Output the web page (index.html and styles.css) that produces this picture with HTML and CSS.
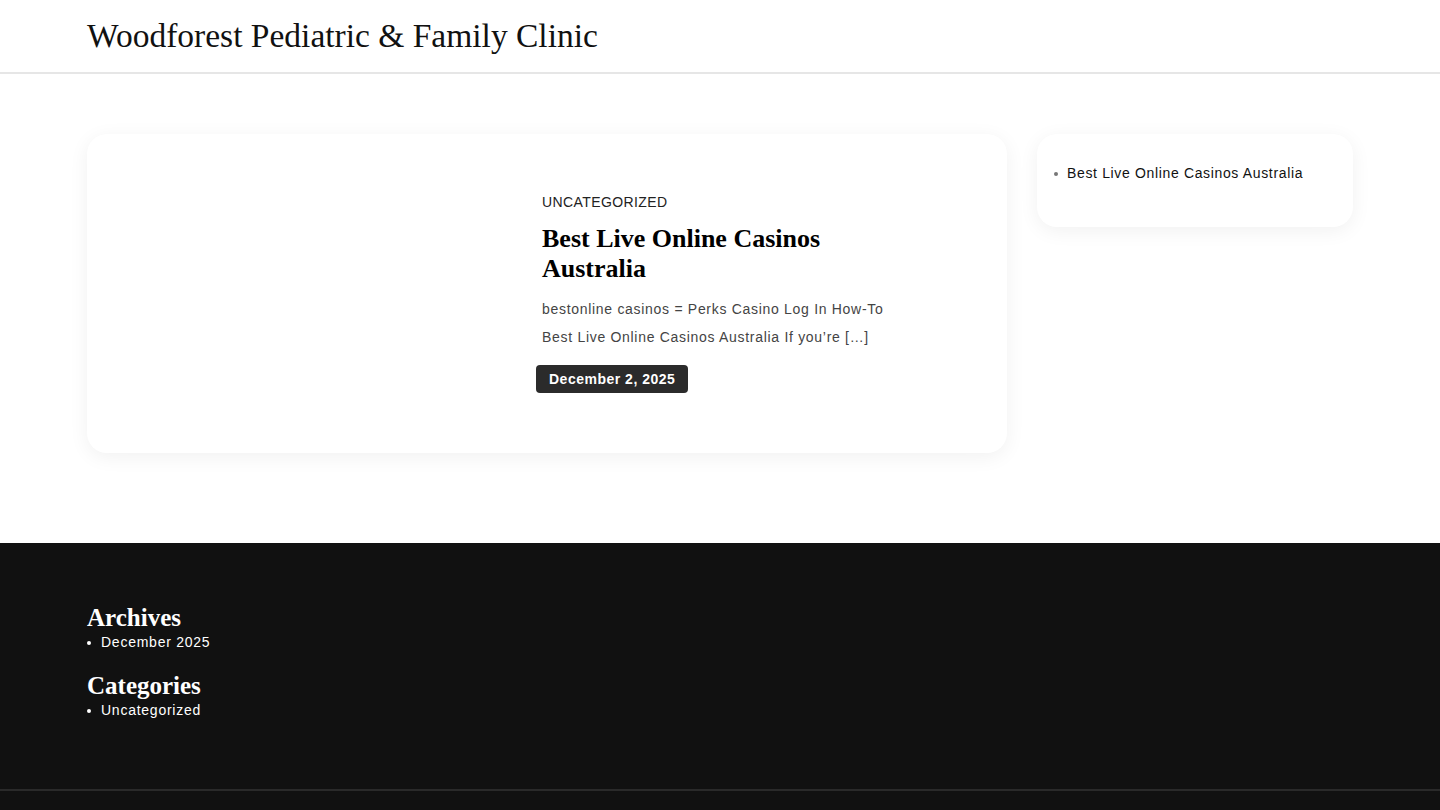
FILE: index.html
```html
<!DOCTYPE html>
<html lang="en">
  <head>
    <meta charset="UTF-8" />
    <meta name="viewport" content="width=device-width, initial-scale=1.0" />
    <title>Woodforest Pediatric &amp; Family Clinic</title>
    <link rel="stylesheet" href="styles.css">
  </head>
  <body>
    <header class="site-header">
      <div class="container">
        <a class="site-title" href="#">Woodforest Pediatric &amp; Family Clinic</a>
      </div>
    </header>

    <main class="site-main">
      <div class="container main-grid">
        <div class="posts">
          <article class="post-card">
            <div class="post-thumb"></div>
            <div class="post-body">
              <span class="post-cat">UNCATEGORIZED</span>
              <h2 class="post-title">Best Live Online Casinos Australia</h2>
              <p class="post-excerpt">bestonline casinos = Perks Casino Log In How-To Best Live Online Casinos Australia If you’re [&hellip;]</p>
              <span class="post-date">December 2, 2025</span>
            </div>
          </article>
        </div>

        <aside class="sidebar">
          <div class="widget">
            <ul>
              <li><a href="#">Best Live Online Casinos Australia</a></li>
            </ul>
          </div>
        </aside>
      </div>
    </main>

    <footer class="site-footer">
      <div class="container footer-widgets">
        <div class="footer-widget">
          <h3>Archives</h3>
          <ul>
            <li><a href="#">December 2025</a></li>
          </ul>
        </div>
        <div class="footer-widget">
          <h3>Categories</h3>
          <ul>
            <li><a href="#">Uncategorized</a></li>
          </ul>
        </div>
      </div>
      <div class="footer-bottom"></div>
    </footer>
  </body>
</html>
```

FILE: styles.css
```css
* {
  margin: 0;
  padding: 0;
  box-sizing: border-box;
}

body {
  font-family: "Liberation Sans", Arial, sans-serif;
  color: #111;
  background: #fff;
}

a {
  color: inherit;
  text-decoration: none;
}

.container {
  width: 1266px;
  margin: 0 auto;
}

/* header */
.site-header {
  border-bottom: 2px solid #e6e6e6;
  height: 74px;
}

.site-header .container {
  padding-top: 16px;
}

.site-title {
  font-family: "Liberation Serif", "Times New Roman", serif;
  font-size: 33.5px;
  line-height: 40px;
  color: #111;
}

/* main */
.site-main {
  padding: 60px 0 90px;
}

.main-grid {
  display: flex;
  gap: 30px;
  align-items: flex-start;
}

.posts {
  width: 920px;
}

.post-card {
  display: flex;
  height: 319px;
  background: #fff;
  border-radius: 20px;
  box-shadow: 0 4px 20px rgba(0, 0, 0, 0.06);
}

.post-thumb {
  width: 455px;
  flex-shrink: 0;
}

.post-body {
  width: 360px;
  padding-top: 60px;
}

.post-cat {
  display: block;
  font-size: 14px;
  letter-spacing: 0.4px;
  color: #222;
  line-height: 16px;
}

.post-title {
  font-family: "Liberation Serif", "Times New Roman", serif;
  font-size: 26px;
  line-height: 30px;
  font-weight: bold;
  color: #000;
  margin-top: 14px;
}

.post-excerpt {
  font-size: 14px;
  line-height: 28px;
  letter-spacing: 0.7px;
  color: #444;
  margin-top: 11px;
}

.post-date {
  display: inline-block;
  margin: 14px 0 0 -6px;
  padding: 0 13px;
  height: 28px;
  line-height: 28px;
  background: #2b2b2b;
  color: #fff;
  font-size: 14px;
  font-weight: bold;
  letter-spacing: 0.5px;
  border-radius: 4px;
}

/* sidebar */
.sidebar {
  width: 316px;
}

.widget {
  background: #fff;
  border-radius: 20px;
  box-shadow: 0 4px 20px rgba(0, 0, 0, 0.06);
  padding: 30px 17px 44px;
}

.widget ul {
  list-style: none;
}

.widget li {
  position: relative;
  padding-left: 13px;
  font-size: 14px;
  line-height: 19px;
  letter-spacing: 0.65px;
  color: #111;
}

.widget li::before {
  content: "";
  position: absolute;
  left: 0;
  top: 8px;
  width: 4px;
  height: 4px;
  border-radius: 50%;
  background: #777;
}

/* footer */
.site-footer {
  background: #111;
  color: #fff;
}

.footer-widgets {
  padding: 61px 0 69px;
}

.footer-widget + .footer-widget {
  margin-top: 20px;
}

.footer-widget h3 {
  font-family: "Liberation Serif", "Times New Roman", serif;
  font-size: 25px;
  line-height: 28px;
  font-weight: bold;
}

.footer-widget ul {
  list-style: none;
}

.footer-widget li {
  position: relative;
  padding-left: 14px;
  font-size: 14px;
  line-height: 20px;
  letter-spacing: 0.75px;
}

.footer-widget li::before {
  content: "";
  position: absolute;
  left: 0;
  top: 9px;
  width: 4px;
  height: 4px;
  border-radius: 50%;
  background: #fff;
}

.footer-bottom {
  border-top: 2px solid #2a2a2a;
  height: 60px;
}
```
